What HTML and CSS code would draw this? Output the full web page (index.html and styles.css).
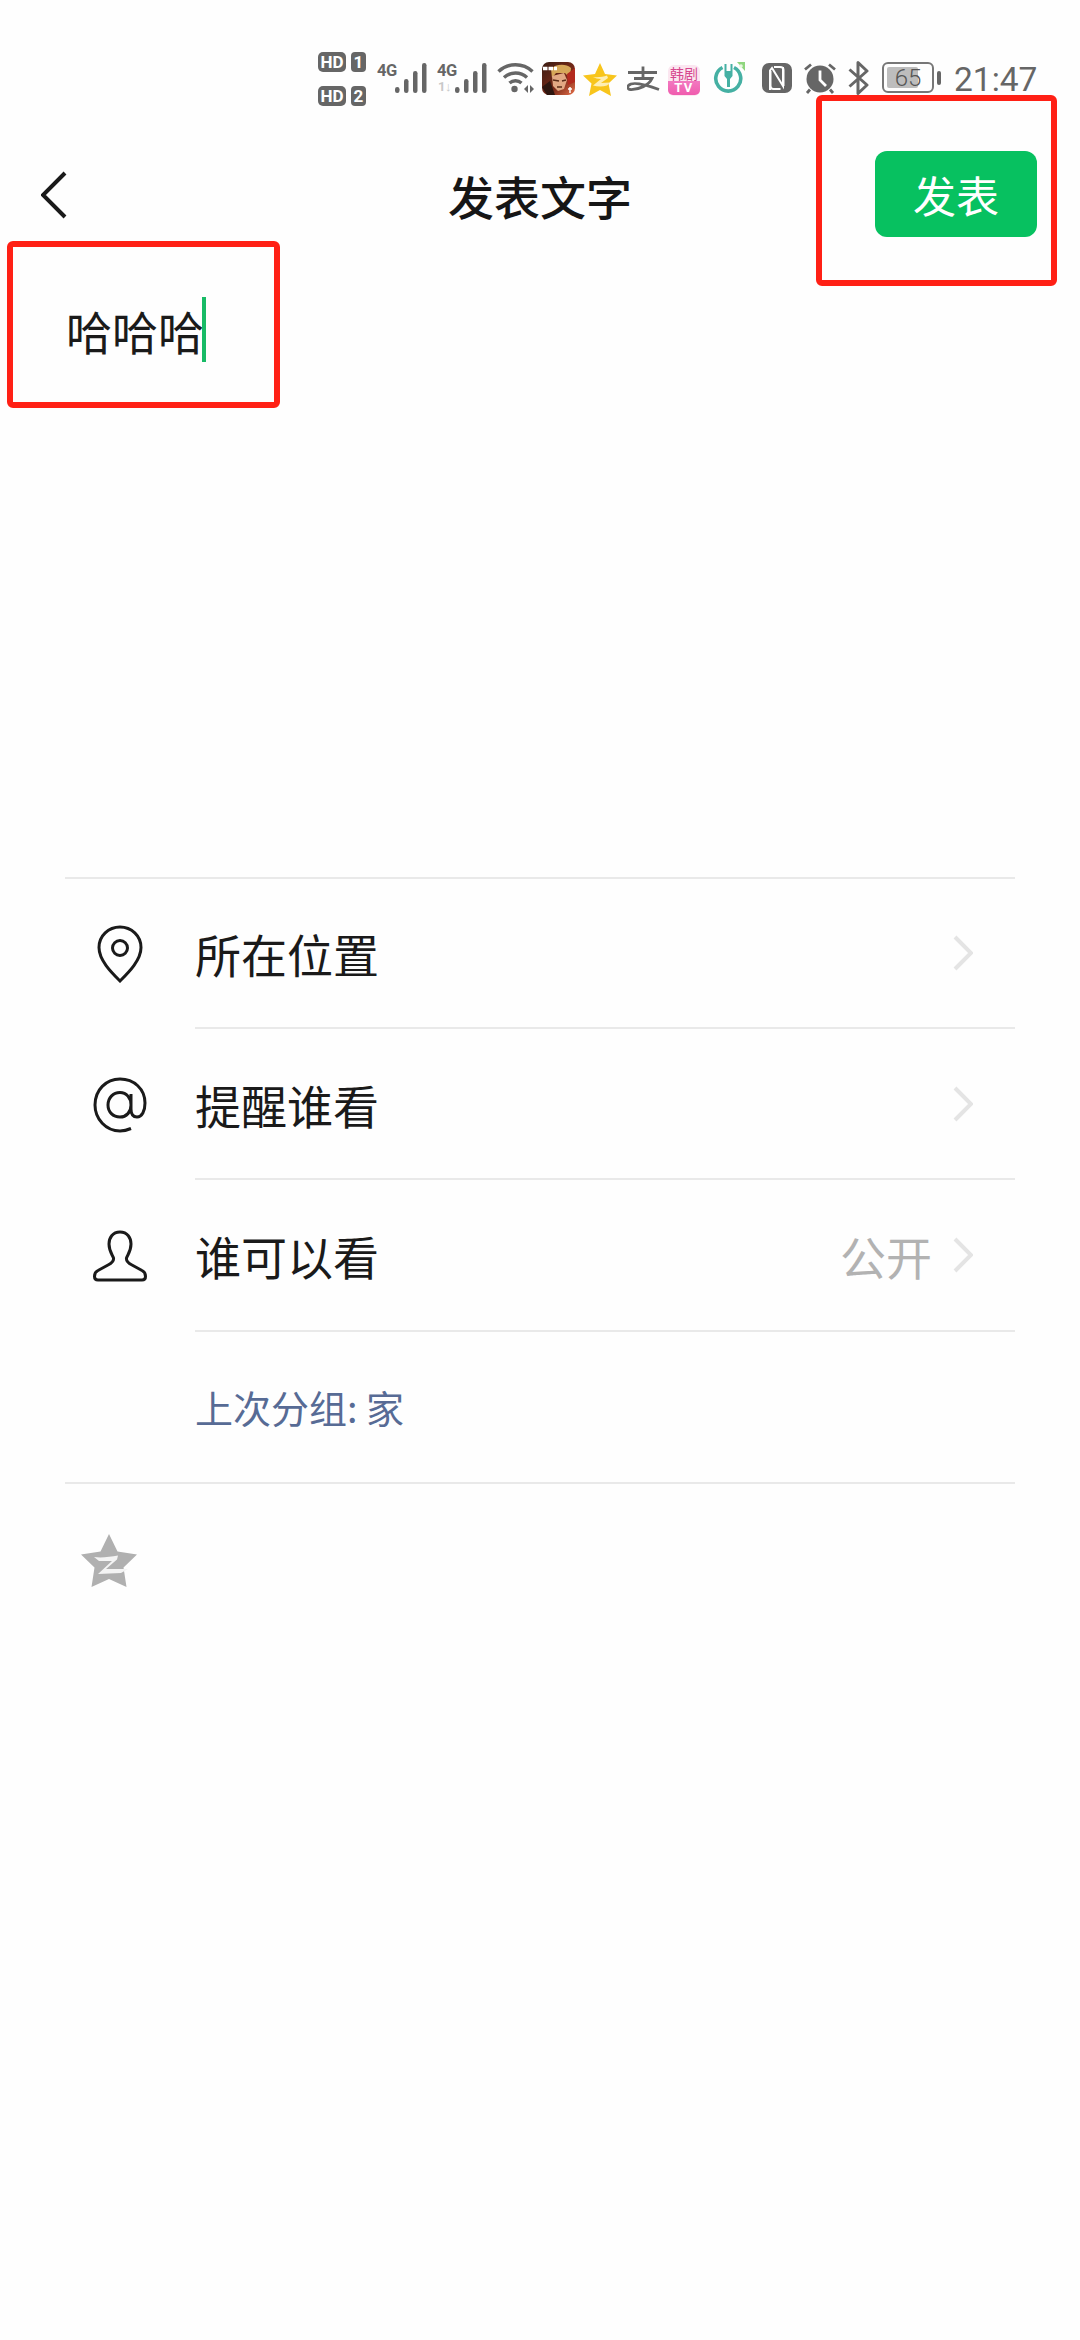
FILE: index.html
```html
<!DOCTYPE html>
<html lang="zh-CN">
<head>
<meta charset="utf-8">
<title>发表文字</title>
<link rel="stylesheet" href="styles.css">
</head>
<body>
<div class="app">
  <div class="status">
    <div class="hd">
      <div class="hd-row"><span class="hd-tag">HD</span><span class="hd-num">1</span></div>
      <div class="hd-row"><span class="hd-tag">HD</span><span class="hd-num">2</span></div>
    </div>
    <div class="signal">
      <span class="sig-label">4G</span>
      <svg width="32" height="30" viewBox="0 0 32 30"><rect x="0" y="24" width="4.500" height="6" rx="2.200" class="g"/><rect x="9" y="16" width="4.500" height="14" rx="2.200" class="g"/><rect x="18" y="8" width="4.500" height="22" rx="2.200" class="g"/><rect x="27" y="0" width="4.500" height="30" rx="2.200" class="g"/></svg>
    </div>
    <div class="signal s2">
      <span class="sig-label">4G<i class="sub">1↓</i></span>
      <svg width="32" height="30" viewBox="0 0 32 30"><rect x="0" y="24" width="4.500" height="6" rx="2.200" class="g"/><rect x="9" y="16" width="4.500" height="14" rx="2.200" class="g"/><rect x="18" y="8" width="4.500" height="22" rx="2.200" class="g"/><rect x="27" y="0" width="4.500" height="30" rx="2.200" class="g"/></svg>
    </div>
    <svg class="i wifi" width="38" height="31" viewBox="0 0 38 31"><path d="M1.500 9.500C11 .5 26 .5 35.500 9.500M7 15.500C13.500 9.500 23.500 9.500 30 15.500M12.500 21C16 18 21 18 24.500 21" fill="none" stroke="#666" stroke-width="3.400"/><circle cx="17.500" cy="27" r="3.200" fill="#666"/><path d="M27 27l4-4v8zM33 23l4 4-4 4z" fill="#666"/></svg>
    <svg class="i game" width="33" height="33" viewBox="0 0 33 33"><defs><linearGradient id="gm" x1="0" y1="0" x2="1" y2="1"><stop offset="0" stop-color="#3a1c12"/><stop offset=".6" stop-color="#7a2a18"/><stop offset="1" stop-color="#e8704a"/></linearGradient></defs><rect width="33" height="33" rx="7" fill="url(#gm)"/><path d="M9 7C13 2 24 1 29 6L28 16 23 11 14 11 10 16z" fill="#d6a758"/><path d="M10 14L22 11 25 18 22 27 16 29 11 24z" fill="#e2a883"/><path d="M11 18l6 1M20 19l4-1M15 25h5" stroke="#5a2c18" stroke-width="1.500"/><path d="M0 25L8 19 13 33H5z" fill="#2e1710"/><path d="M25 12L33 6V20L26 23z" fill="#b32a1e"/><path d="M1 6.500H15" stroke="#fff" stroke-width="3.400" stroke-dasharray="4.500 1"/><path d="M26 27h4M28 25v6" stroke="#fff" stroke-width="1.500"/></svg>
    <svg class="i star" width="34" height="33" viewBox="0 0 34 33"><path d="M17 0l5 11 12 1.500-8.500 8L28 33 17 27 6 33l2.500-12.500L0 12.500 12 11z" fill="#f8c51c"/><path d="M10 14c5 .5 10 0 14-1.500l1 2.500-7 5 9-.500-3 3c-5 1.500-10 1-14 0l8-6.500c-3 0-6-1-8-2z" fill="#fdeeb4"/></svg>
    <svg class="i ali" width="33" height="25" viewBox="0 0 33 25"><path d="M1 6.500H30M16 .5V12.500M7 12.500H25C22 19 12 24 3 23.500 1 23.500 0 21 1.500 19.500 5 15.500 17 18 32 23.500" fill="none" stroke="#666" stroke-width="2.800"/></svg>
    <div class="tv"><span class="tv-top">韩剧</span><span class="tv-btm">TV</span></div>
    <svg class="i pwr" width="32" height="31" viewBox="0 0 32 31"><path d="M9.500 5.500A12.500 12.500 0 1 0 21 5.500" fill="none" stroke="#45b0a3" stroke-width="3.600"/><path d="M11.500 2h2v7h4V2h2v12l-2.500 3v8h-3v-8l-2.500-3z" fill="#45b0a3"/><path d="M24 0h8v9z" fill="#8fd67e"/><circle cx="28" cy="4" r="1.800" fill="#e8f8e0"/></svg>
    <svg class="i nfc" width="30" height="30" viewBox="0 0 30 30"><rect width="30" height="30" rx="7" fill="#666"/><path d="M8 27V7.500L10 5 21 23V4M12 4h6c2 0 3.500 1 3.500 3v16M8.500 8v15c0 2 1 3 3 3h7" fill="none" stroke="#fff" stroke-width="2"/></svg>
    <svg class="i alarm" width="34" height="32" viewBox="0 0 34 32"><circle cx="17" cy="17" r="13.500" fill="#666"/><path d="M17 8.500V18l6 6" fill="none" stroke="#fff" stroke-width="2.800"/><path d="M2 7.500L8 2.500M32 7.500L26 2.500M7 27.500L4 31M27 27.500L30 31" stroke="#666" stroke-width="2.800" fill="none"/></svg>
    <svg class="i bt" width="21" height="34" viewBox="0 0 21 34"><path d="M1.500 8.500L19 24 10 32.500V1.500L19 10 1.500 25.500" fill="none" stroke="#666" stroke-width="3" stroke-linejoin="round"/></svg>
    <div class="battery">
      <div class="batt-body"><span class="batt-fill"></span><span class="batt-num">65</span></div>
      <span class="batt-nub"></span>
    </div>
    <span class="time">21:47</span>
  </div>

  <header class="nav">
    <svg class="back" width="26" height="48" viewBox="0 0 26 48"><path d="M24 2L2 24 24 46" fill="none" stroke="#1a1a1a" stroke-width="4"/></svg>
    <h1 class="title">发表文字</h1>
    <button class="publish">发表</button>
    <span class="mark mark-btn"></span>
  </header>

  <section class="editor">
    <span class="typed">哈哈哈</span><span class="caret"></span>
    <span class="mark mark-text"></span>
  </section>

  <section class="options">
    <div class="row">
      <div class="row-icon">
        <svg width="46" height="58" viewBox="0 0 46 58"><path d="M23 2C11.500 2 2 11 2 22.500 2 35 14 47 23 56 32 47 44 35 44 22.500 44 11 34.500 2 23 2z" fill="none" stroke="#1a1a1a" stroke-width="3"/><circle cx="23" cy="23" r="7.500" fill="none" stroke="#1a1a1a" stroke-width="3"/></svg>
      </div>
      <div class="row-main"><span class="label">所在位置</span><svg class="chev" width="20" height="36" viewBox="0 0 20 36"><path d="M2 2L18 18 2 34" fill="none" stroke="#e4e4e4" stroke-width="4"/></svg></div>
    </div>
    <div class="row">
      <div class="row-icon">
        <svg width="54" height="56" viewBox="0 0 54 56"><path d="M38 51.500C34.500 53 31 54 27 54 13 54 2 42 2 28 2 13 13 2 27 2 41 2 52 12 52 26 52 34 49 40 44 40 39.500 40 38 36.500 38 32V17M38 28C38 35 33.500 40 27 40 20 40 15 35 15 28 15 21 20 15.500 27 15.500 33.500 15.500 38 21 38 28z" fill="none" stroke="#1a1a1a" stroke-width="3"/></svg>
      </div>
      <div class="row-main"><span class="label">提醒谁看</span><svg class="chev" width="20" height="36" viewBox="0 0 20 36"><path d="M2 2L18 18 2 34" fill="none" stroke="#e4e4e4" stroke-width="4"/></svg></div>
    </div>
    <div class="row">
      <div class="row-icon">
        <svg width="54" height="52" viewBox="0 0 54 52"><path d="M27 2C19.500 2 16 8 16 14 16 21 19.500 25 20.500 28 21 31 19 33 15 35L5 40.500C2 42 1.500 44 1.500 46.500 1.500 49 3 50 5 50H49C51 50 52.500 49 52.500 46.500 52.500 44 52 42 49 40.500L39 35C35 33 33 31 33.500 28 34.500 25 38 21 38 14 38 8 34.500 2 27 2z" fill="none" stroke="#1a1a1a" stroke-width="3"/></svg>
      </div>
      <div class="row-main"><span class="label">谁可以看</span><span class="value">公开</span><svg class="chev" width="20" height="36" viewBox="0 0 20 36"><path d="M2 2L18 18 2 34" fill="none" stroke="#e4e4e4" stroke-width="4"/></svg></div>
    </div>
    <div class="group-row"><span class="group-note">上次分组: 家</span></div>
  </section>

  <div class="share">
    <svg width="56" height="54" viewBox="0 0 56 54"><path d="M28 0L36.500 17.500 56 20.500 42.500 33.500 45.500 53 28 45 10.500 53 13.500 33.500 0 20.500 19.500 17.500z" fill="#b0b0b0"/><path d="M13 23C20 24 29 23 37 21.500L36 25.500 25 35 47 35 40 39 17 40 31 27 18 27z" fill="#f4f4f4"/></svg>
  </div>
</div>
</body>
</html>
```
FILE: styles.css
```css
* { box-sizing: border-box; }
html, body { margin: 0; padding: 0; }
body { background: #fefefe; font-family: "Noto Sans CJK SC", "Noto Sans", sans-serif; color: #1a1a1a; }
.app { width: 1080px; height: 2340px; display: flex; flex-direction: column; overflow: hidden; }

.status { height: 120px; padding: 52px 0 0 318px; display: flex; align-items: flex-start; color: #666; font-family: Roboto, sans-serif; }
.g { fill: #666; }
.hd { width: 48px; display: flex; flex-direction: column; gap: 14px; }
.hd-row { display: flex; justify-content: space-between; height: 20px; }
.hd-tag, .hd-num { background: #666; color: #fff; font-weight: 700; font-size: 17px; line-height: 20px; border-radius: 5px; text-align: center; }
.hd-tag { width: 28px; }
.hd-num { width: 15px; border-radius: 4px; }
.signal { width: 50px; height: 30px; margin: 11px 0 0 11px; display: flex; align-items: flex-end; position: relative; }
.signal.s2 { margin-left: 10px; }
.sig-label { position: relative; width: 18px; align-self: flex-start; font-size: 16.500px; line-height: 15px; font-weight: 700; color: #666; letter-spacing: -.5px; }
.sub { position: absolute; left: 1px; top: 17px; font-style: normal; font-size: 13px; line-height: 13px; color: #c8c8c8; font-weight: 700; }
.i { display: block; flex: none; margin-top: 10px; }
.wifi { margin-left: 10px; }
.game { margin-left: 7px; }
.star { margin-left: 8px; margin-top: 11px; }
.ali { margin-left: 10px; margin-top: 14px; }
.tv { width: 32px; height: 31px; margin: 13px 0 0 8px; display: flex; flex-direction: column; align-items: center; border-radius: 6px; background: #fbe6f0; }
.tv-top { font: 14px/16px "Noto Sans CJK SC", sans-serif; color: #d6478e; height: 16px; white-space: nowrap; }
.tv-btm { width: 100%; height: 14px; border-radius: 0 0 5px 5px; background: linear-gradient(#f279c0, #f05cae); color: #fff; font: 700 13px/14px Roboto, sans-serif; text-align: center; letter-spacing: 1.500px; }
.pwr { margin-left: 13px; }
.nfc { margin-left: 17px; margin-top: 11px; }
.alarm { margin-left: 11px; }
.bt { margin-left: 11px; margin-top: 9px; }
.battery { margin: 10px 0 0 13px; display: flex; align-items: center; gap: 3px; }
.batt-body { width: 52px; height: 31px; border: 2.500px solid #777; border-radius: 6px; position: relative; display: flex; align-items: center; justify-content: center; }
.batt-fill { position: absolute; left: 3px; top: 3px; bottom: 3px; width: 31px; background: #bdbdbd; border-radius: 2px; }
.batt-num { position: relative; font-size: 24px; font-weight: 300; color: #555; line-height: 1; }
.batt-nub { width: 4px; height: 14px; background: #666; border-radius: 2px; }
.time { margin: 8px 0 0 13px; font-size: 33.500px; line-height: 40px; font-weight: 400; color: #666; white-space: nowrap; }

.nav { height: 150px; position: relative; display: flex; align-items: center; justify-content: space-between; padding: 0 43px 0 41px; }
.back { display: block; }
.title { margin: 0; font-size: 46px; font-weight: 500; line-height: 60px; color: #161616; position: absolute; left: 0; right: 0; top: 45px; text-align: center; }
.publish { width: 162px; height: 86px; border: 0; border-radius: 12px; background: #07c160; color: #fff; font: 400 43px/86px "Noto Sans CJK SC", sans-serif; padding: 0; margin-top: -2px; }
.mark { position: absolute; border: 6px solid #ff2015; border-radius: 6px; pointer-events: none; }
.mark-btn { left: 816px; top: -25px; width: 241px; height: 191px; }

.editor { height: 607px; padding: 27px 0 0 66px; display: flex; align-items: flex-start; position: relative; }
.typed { font-size: 46px; line-height: 66px; color: #1a1a1a; }
.caret { width: 4px; height: 65px; background: #18bb66; margin-left: -2px; }
.mark-text { left: 7px; top: -29px; width: 273px; height: 167px; }

.options { margin: 0 65px; border-top: 2px solid #e9e9e9; border-bottom: 2px solid #e9e9e9; }
.row { display: flex; height: 151px; }
.row:nth-child(1) { height: 150px; }
.row:nth-child(3) { height: 152px; }
.row-icon { width: 130px; flex: none; display: flex; align-items: center; justify-content: center; padding-right: 20px; }
.row-main { flex: 1; display: flex; align-items: center; border-bottom: 2px solid #e9e9e9; padding-right: 42px; }
.label { flex: 1; font-size: 46px; line-height: 60px; color: #1a1a1a; }
.value { font-size: 46px; line-height: 60px; color: #b2b2b2; margin-right: 21px; }
.chev { display: block; }
.group-row { height: 150px; padding: 0 0 0 130px; display: flex; align-items: center; }
.group-note { font-size: 38px; line-height: 50px; color: #576b95; }
.share { padding: 50px 0 0 81px; }
.share svg { display: block; }
```
